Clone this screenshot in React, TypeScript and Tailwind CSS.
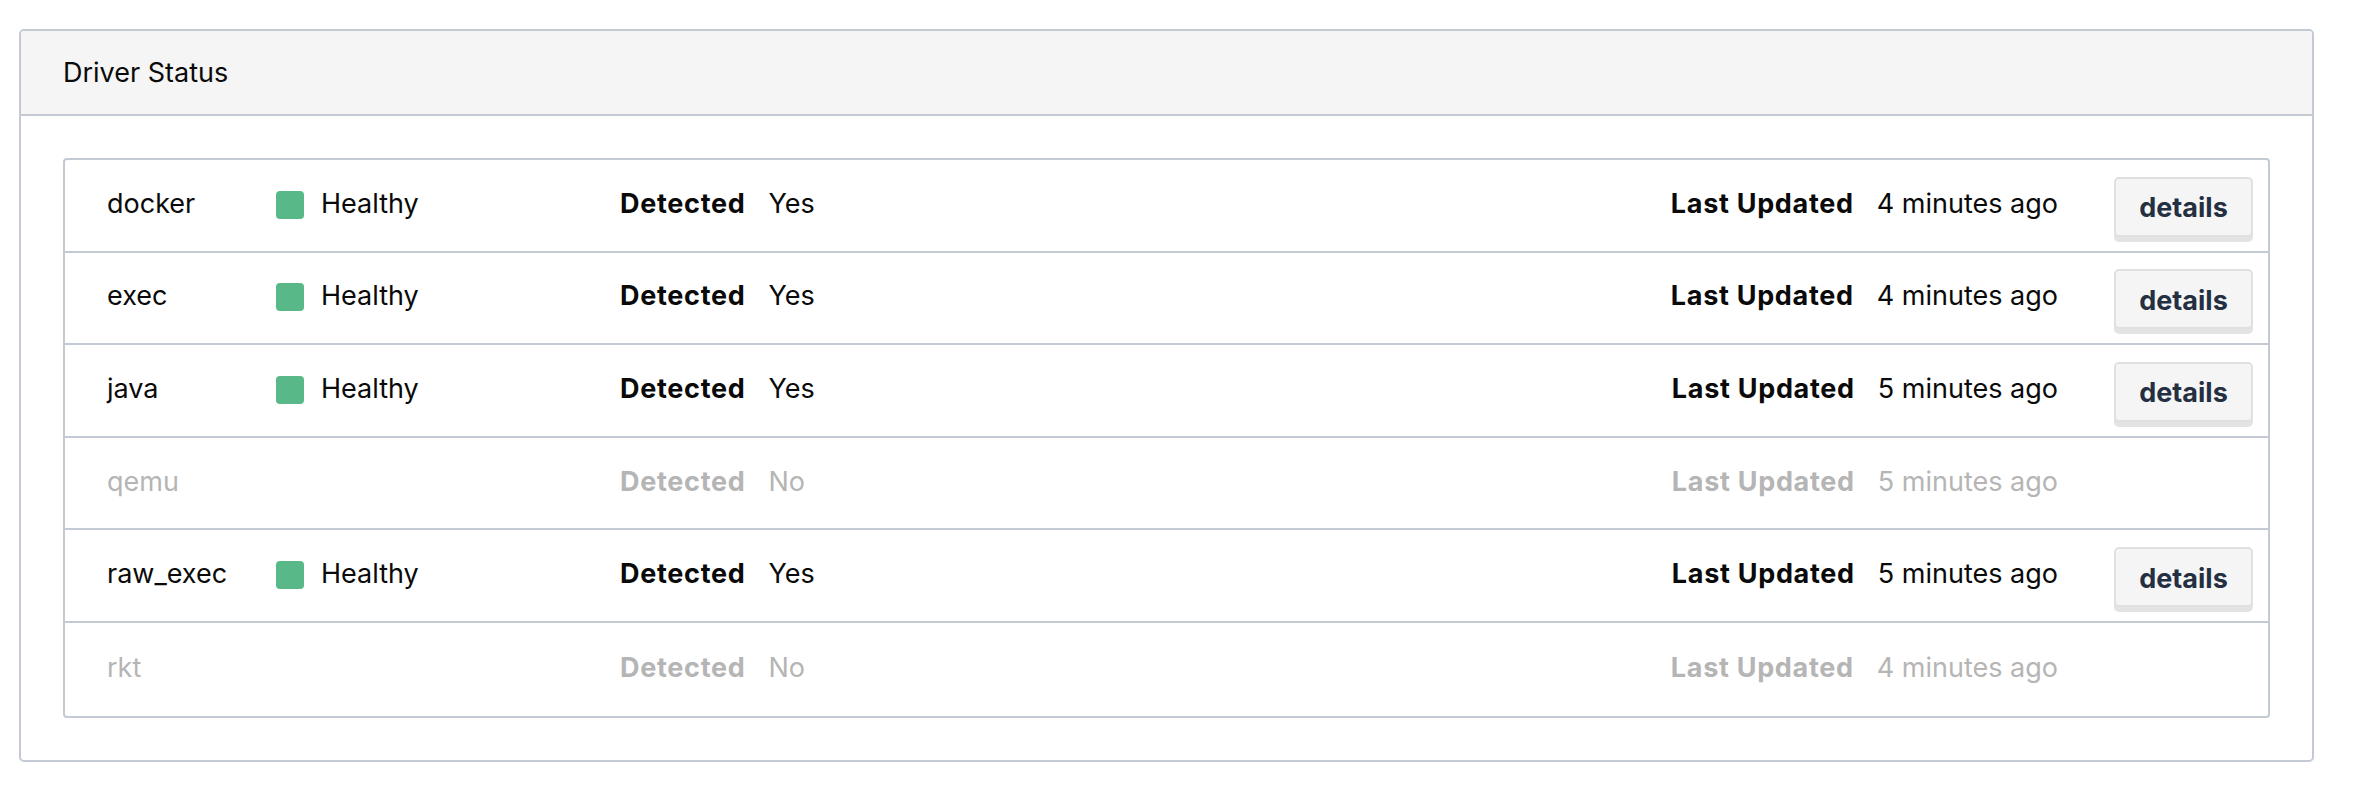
type Driver = {
  name: string;
  detected: boolean;
  healthy: boolean;
  updated: string;
};

const drivers: Driver[] = [
  { name: "docker", detected: true, healthy: true, updated: "4 minutes ago" },
  { name: "exec", detected: true, healthy: true, updated: "4 minutes ago" },
  { name: "java", detected: true, healthy: true, updated: "5 minutes ago" },
  { name: "qemu", detected: false, healthy: false, updated: "5 minutes ago" },
  { name: "raw_exec", detected: true, healthy: true, updated: "5 minutes ago" },
  { name: "rkt", detected: false, healthy: false, updated: "4 minutes ago" },
];

function DriverRow({ driver }: { driver: Driver }) {
  const muted = !driver.detected;
  return (
    <div
      className={`flex h-[92.6px] items-center pb-[4px] pl-[42px] pr-[15px] ${
        muted ? "text-[#b5b5b5]" : "text-[#0a0a0a]"
      }`}
    >
      <div className="w-[169px] shrink-0">{driver.name}</div>
      <div className="flex w-[344px] shrink-0 items-center gap-[17px]">
        {driver.healthy && (
          <>
            <span className="mt-[3px] block h-[28px] w-[28px] rounded-[4px] bg-[#58b887]" />
            <span>Healthy</span>
          </>
        )}
      </div>
      <div className="flex items-center gap-[23px]">
        <span className="font-bold tracking-[0.7px]">Detected</span>
        <span>{driver.detected ? "Yes" : "No"}</span>
      </div>
      <div className="flex-1" />
      <div className="flex items-center gap-[23px]">
        <span className="font-bold tracking-[0.7px]">Last Updated</span>
        <span>{driver.updated}</span>
      </div>
      <div className="ml-[56px] w-[139px] shrink-0">
        {driver.detected && (
          <button className="mt-[7px] h-[60px] w-[139px] rounded-[5px] border-2 border-[#e0e0e0] bg-[#f5f5f5] pt-[2px] font-bold text-[#243042] shadow-[0_5px_0_#e3e3e3]">
            details
          </button>
        )}
      </div>
    </div>
  );
}

export default function App() {
  return (
    <div className="min-h-screen bg-white pt-[29px] pl-[19px] font-['Inter',sans-serif] text-[27px] leading-none">
      <div className="w-[2295px] overflow-hidden rounded-[5px] border-2 border-[#c3cad4]">
        <div className="flex h-[85px] items-center border-b-2 border-[#c3cad4] bg-[#f5f5f5] px-[42px] text-[#0a0a0a]">
          Driver Status
        </div>
        <div className="p-[42px]">
          <div className="divide-y-2 divide-[#c3cad4] rounded-[4px] border-2 border-[#c3cad4]">
            {drivers.map((d) => (
              <DriverRow key={d.name} driver={d} />
            ))}
          </div>
        </div>
      </div>
    </div>
  );
}
